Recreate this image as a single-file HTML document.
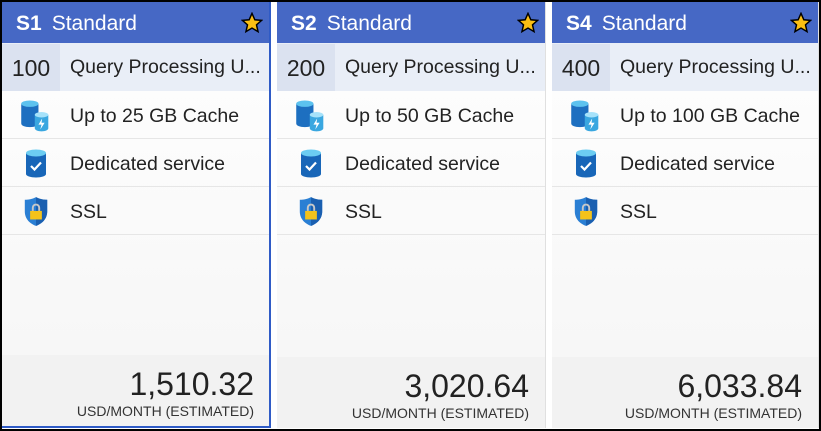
<html><head><style>
body{margin:0;width:821px;height:431px;background:#fff;position:relative;overflow:hidden;font-family:"Liberation Sans",sans-serif;}
.frame{position:absolute;left:0;top:0;width:817px;height:427px;border:2px solid #000;}
.card{position:absolute;top:2px;height:426px;width:268px;background:linear-gradient(#fff,#f7f7f7 340px);box-sizing:border-box;border-right:1px solid #e0e0e0;}
.sel{border-right:2px solid #2f5bc6;border-bottom:2px solid #2f5bc6;}
.hd{height:41px;background:#4668c5;color:#fff;font-size:21px;line-height:43px;padding-left:14px;position:relative;}
.hd b{font-weight:bold;margin-right:10px}
.star{position:absolute;right:6px;top:10px}
.r1{height:47px;background:#e9eef7;display:flex;align-items:center;font-size:19.5px;color:#222;padding-top:1px}
.num{width:58px;height:47px;background:#dbe2f0;text-align:center;line-height:48px;font-size:23px;}
.r1 span{margin-left:10px;white-space:nowrap}
.row{height:47px;border-bottom:1px solid #e6e6e6;display:flex;align-items:center;font-size:19.5px;color:#222;padding-top:3px;box-sizing:border-box;height:48px}
.ic{width:68px;display:flex;justify-content:center}
.ft{position:absolute;left:0;right:0;bottom:0;height:71px;background:#f2f2f2;text-align:right;padding-right:16px;color:#222}
.pr{font-size:32px;margin-top:13px;line-height:33px}
.us{font-size:14px;color:#333;margin-top:2px}
</style></head><body>
<div class="frame"></div>
<div class="card sel" style="left:2px;width:269px">
 <div class="hd"><b>S1</b>Standard<svg class="star" width="22" height="22" viewBox="0 0 24 24"><path d="M12 1.5l3.1 7 7.4.6-5.6 4.9 1.7 7.4L12 17.5l-6.6 3.9 1.7-7.4L1.5 9.1l7.4-.6z" fill="#fbbf13" stroke="#000" stroke-width="1.6"/></svg></div>
 <div class="r1"><div class="num">100</div><span>Query Processing U...</span></div>
 <div class="row"><div class="ic"><svg width="32" height="32" viewBox="0 0 26 26"><path d="M1 3v16c0 2 3 3 7 3s7-1 7-3V3z" fill="#1d6fc0"/><ellipse cx="8" cy="3" rx="7" ry="2.6" fill="#5cc2ef"/><path d="M12 12v11c0 1.5 2.5 2.5 5.5 2.5S23 24.5 23 23V12z" fill="#3aa7e0"/><ellipse cx="17.5" cy="12" rx="5.5" ry="2.2" fill="#a6e2fa"/><path d="M18 15l-3 5h2.5l-1 4 3.5-5.5h-2.5z" fill="#fff"/></svg></div>Up to 25 GB Cache</div>
 <div class="row"><div class="ic"><svg width="24" height="30" viewBox="0 0 24 30"><path d="M2 4v21c0 2 4.5 3.5 10 3.5s10-1.5 10-3.5V4z" fill="#1866b8"/><ellipse cx="12" cy="4" rx="10" ry="3.5" fill="#6ccdf2"/><path d="M7 17l3.5 3.5 6.5-7" stroke="#fff" stroke-width="2.2" fill="none"/></svg></div>Dedicated service</div>
 <div class="row"><div class="ic"><svg width="26" height="32" viewBox="0 0 24 30"><path d="M12 1C8 3 5 3.5 1.5 3.5v11c0 7 5 11.5 10.5 13.5 5.5-2 10.5-6.5 10.5-13.5v-11C19 3.5 16 3 12 1z" fill="#2a7fd4"/><path d="M12 1v27c5.5-2 10.5-6.5 10.5-13.5v-11C19 3.5 16 3 12 1z" fill="#1a5fb0"/><path d="M9 14v-3a3 3 0 016 0v3" stroke="#c8c8c8" stroke-width="1.8" fill="none"/><rect x="6.5" y="14" width="11" height="8" fill="#f4c21a"/></svg></div>SSL</div>
 <div class="ft" style="padding-right:15px"><div class="pr">1,510.32</div><div class="us">USD/MONTH (ESTIMATED)</div></div>
</div>
<div class="card" style="left:277px;width:269px">
 <div class="hd"><b>S2</b>Standard<svg class="star" width="22" height="22" viewBox="0 0 24 24"><path d="M12 1.5l3.1 7 7.4.6-5.6 4.9 1.7 7.4L12 17.5l-6.6 3.9 1.7-7.4L1.5 9.1l7.4-.6z" fill="#fbbf13" stroke="#000" stroke-width="1.6"/></svg></div>
 <div class="r1"><div class="num">200</div><span>Query Processing U...</span></div>
 <div class="row"><div class="ic"><svg width="32" height="32" viewBox="0 0 26 26"><path d="M1 3v16c0 2 3 3 7 3s7-1 7-3V3z" fill="#1d6fc0"/><ellipse cx="8" cy="3" rx="7" ry="2.6" fill="#5cc2ef"/><path d="M12 12v11c0 1.5 2.5 2.5 5.5 2.5S23 24.5 23 23V12z" fill="#3aa7e0"/><ellipse cx="17.5" cy="12" rx="5.5" ry="2.2" fill="#a6e2fa"/><path d="M18 15l-3 5h2.5l-1 4 3.5-5.5h-2.5z" fill="#fff"/></svg></div>Up to 50 GB Cache</div>
 <div class="row"><div class="ic"><svg width="24" height="30" viewBox="0 0 24 30"><path d="M2 4v21c0 2 4.5 3.5 10 3.5s10-1.5 10-3.5V4z" fill="#1866b8"/><ellipse cx="12" cy="4" rx="10" ry="3.5" fill="#6ccdf2"/><path d="M7 17l3.5 3.5 6.5-7" stroke="#fff" stroke-width="2.2" fill="none"/></svg></div>Dedicated service</div>
 <div class="row"><div class="ic"><svg width="26" height="32" viewBox="0 0 24 30"><path d="M12 1C8 3 5 3.5 1.5 3.5v11c0 7 5 11.5 10.5 13.5 5.5-2 10.5-6.5 10.5-13.5v-11C19 3.5 16 3 12 1z" fill="#2a7fd4"/><path d="M12 1v27c5.5-2 10.5-6.5 10.5-13.5v-11C19 3.5 16 3 12 1z" fill="#1a5fb0"/><path d="M9 14v-3a3 3 0 016 0v3" stroke="#c8c8c8" stroke-width="1.8" fill="none"/><rect x="6.5" y="14" width="11" height="8" fill="#f4c21a"/></svg></div>SSL</div>
 <div class="ft"><div class="pr">3,020.64</div><div class="us">USD/MONTH (ESTIMATED)</div></div>
</div>
<div class="card" style="left:552px;width:267px">
 <div class="hd"><b>S4</b>Standard<svg class="star" width="22" height="22" viewBox="0 0 24 24"><path d="M12 1.5l3.1 7 7.4.6-5.6 4.9 1.7 7.4L12 17.5l-6.6 3.9 1.7-7.4L1.5 9.1l7.4-.6z" fill="#fbbf13" stroke="#000" stroke-width="1.6"/></svg></div>
 <div class="r1"><div class="num">400</div><span>Query Processing U...</span></div>
 <div class="row"><div class="ic"><svg width="32" height="32" viewBox="0 0 26 26"><path d="M1 3v16c0 2 3 3 7 3s7-1 7-3V3z" fill="#1d6fc0"/><ellipse cx="8" cy="3" rx="7" ry="2.6" fill="#5cc2ef"/><path d="M12 12v11c0 1.5 2.5 2.5 5.5 2.5S23 24.5 23 23V12z" fill="#3aa7e0"/><ellipse cx="17.5" cy="12" rx="5.5" ry="2.2" fill="#a6e2fa"/><path d="M18 15l-3 5h2.5l-1 4 3.5-5.5h-2.5z" fill="#fff"/></svg></div>Up to 100 GB Cache</div>
 <div class="row"><div class="ic"><svg width="24" height="30" viewBox="0 0 24 30"><path d="M2 4v21c0 2 4.5 3.5 10 3.5s10-1.5 10-3.5V4z" fill="#1866b8"/><ellipse cx="12" cy="4" rx="10" ry="3.5" fill="#6ccdf2"/><path d="M7 17l3.5 3.5 6.5-7" stroke="#fff" stroke-width="2.2" fill="none"/></svg></div>Dedicated service</div>
 <div class="row"><div class="ic"><svg width="26" height="32" viewBox="0 0 24 30"><path d="M12 1C8 3 5 3.5 1.5 3.5v11c0 7 5 11.5 10.5 13.5 5.5-2 10.5-6.5 10.5-13.5v-11C19 3.5 16 3 12 1z" fill="#2a7fd4"/><path d="M12 1v27c5.5-2 10.5-6.5 10.5-13.5v-11C19 3.5 16 3 12 1z" fill="#1a5fb0"/><path d="M9 14v-3a3 3 0 016 0v3" stroke="#c8c8c8" stroke-width="1.8" fill="none"/><rect x="6.5" y="14" width="11" height="8" fill="#f4c21a"/></svg></div>SSL</div>
 <div class="ft"><div class="pr">6,033.84</div><div class="us">USD/MONTH (ESTIMATED)</div></div>
</div>
</body></html>
